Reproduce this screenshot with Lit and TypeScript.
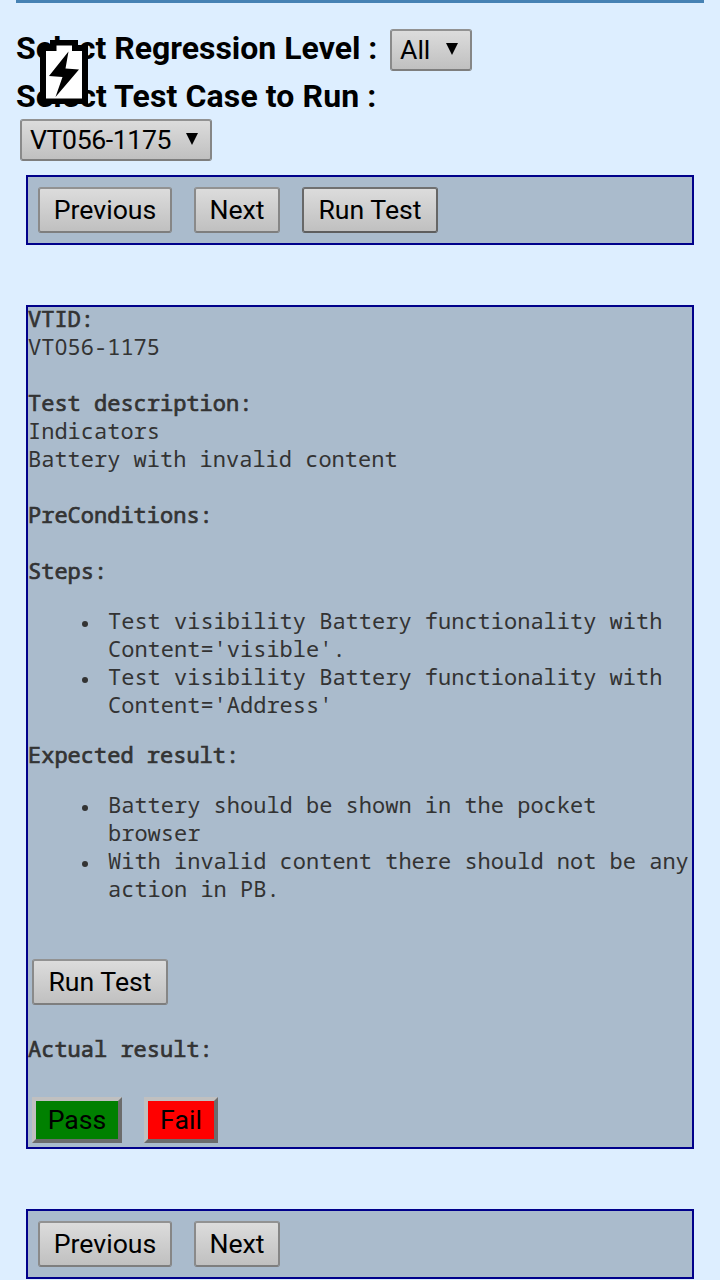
import { LitElement, html, css, nothing } from "lit";
import { customElement } from "lit/decorators.js";

@customElement("app-root")
export class AppRoot extends LitElement {
  static styles = css`
    :host { display: block; position: relative; box-sizing: border-box; height: 1280px; overflow: hidden; background: #def; padding: 0 16px; font-family: Roboto, sans-serif; color: #000; }
    * { box-sizing: border-box; }
    .rule { height: 3px; background: #4682b4; }
    .heading { display: flex; align-items: center; height: 44px; font-size: 32px; font-weight: 700; line-height: 38px; white-space: pre; }
    .first { margin-top: 25px; }
    .label { display: block; width: 374px; }
    .first .label { padding-bottom: 4px; }
    .second { height: 46px; margin-top: 1px; letter-spacing: 0.11px; }
    .select, .btn { display: flex; align-items: center; border: 2px solid; border-color: #929292 #868686 #7e7e7e #8a8a8a; border-radius: 3px; background: linear-gradient(#dcdcdc, #c0c0c0); color: #000; font: 400 26.67px/30px Roboto, sans-serif; white-space: nowrap; padding: 0 14px; margin: 0; }
    .select { height: 42px; padding: 0 12px 0 8px; justify-content: space-between; }
    .all { width: 82px; }
    .test { width: 192px; margin-left: 4px; letter-spacing: -0.4px; }
    .arrow { width: 12px; height: 12px; margin-bottom: 2px; }
    .bar { display: flex; gap: 22px; height: 70px; margin: 14px 10px 0; padding: 10px; border: 2px solid #00008b; background: #abc; }
    .bottom { margin-top: 60px; }
    .btn { height: 46px; justify-content: center; padding: 0; }
    .prev { width: 134px; } .next { width: 86px; } .run { width: 136px; }
    .focus { border-color: #707070 #666 #5e5e5e #686868; }
    .panel { height: 844px; margin: 60px 10px 0; border: 2px solid #00008b; background: #abc; color: #333; font: 22px/28px "Noto Sans Mono", "DejaVu Sans Mono", monospace; white-space: nowrap; }
    .line { height: 28px; margin-top: -2px; margin-bottom: 2px; }
    .panel > .line:first-child { margin-top: -3px; }
    .strong { -webkit-text-stroke: 0.7px #333; }
    .zero { display: inline-block; width: 13.2px; text-align: center; line-height: 20px; font-family: "Noto Sans", sans-serif; }
    .list { list-style: none; margin: 22px 0 24px; padding: 0 0 0 80px; }
    .list li { display: block; position: relative; white-space: pre-line; }
    .list li::before { content: ""; position: absolute; left: -26px; top: 15px; width: 6px; height: 6px; border-radius: 50%; background: #333; }
    .panel .btn { margin-left: 4px; }
    .gap { height: 33px; }
    .actual { margin-top: 31px; }
    .verdicts { display: flex; gap: 22px; margin: 35px 0 0 4px; }
    .panel .verdict { margin: 0; height: 46px; border: 4px solid; border-color: #c0c0c0 #6c6c6c #6c6c6c #c0c0c0; border-radius: 0; }
    .pass { width: 90px; background: #008000; }
    .fail { width: 74px; background: #f00; }
    .battery { position: absolute; left: 40px; top: 40px; width: 48px; height: 64px; }
  `;

  private arrow() {
    return html`<svg class="arrow" viewBox="0 0 12 12"><path d="M0 0H12L6 12Z" /></svg>`;
  }

  private line(text: unknown, strong = false) {
    return html`<div class="line ${strong ? "strong" : ""}">${text}</div>`;
  }

  private nav(cls: string, run: boolean) {
    return html`<div class="bar ${cls}">
      <button class="btn prev">Previous</button>
      <button class="btn next">Next</button>
      ${run ? html`<button class="btn run focus">Run Test</button>` : nothing}
    </div>`;
  }

  render() {
    return html`
      <div class="rule"></div>
      <div class="heading first"><span class="label">Select Regression Level :</span><div class="select all"><span>All</span>${this.arrow()}</div></div>
      <div class="heading second"><span class="label">Select Test Case to Run :</span></div>
      <div class="select test"><span>VT056-1175</span>${this.arrow()}</div>
      ${this.nav("", true)}
      <div class="panel">
        ${this.line("VTID:", true)}${this.line(html`VT<span class="zero">0</span>56-1175`)}${this.line("")}
        ${this.line("Test description:", true)}${this.line("Indicators")}${this.line("Battery with invalid content")}${this.line("")}
        ${this.line("PreConditions:", true)}${this.line("")}
        ${this.line("Steps:", true)}
        <ul class="list"><li>${"Test visibility Battery functionality with\nContent='visible'."}</li><li>${"Test visibility Battery functionality with\nContent='Address'"}</li></ul>
        ${this.line("Expected result:", true)}
        <ul class="list"><li>${"Battery should be shown in the pocket\nbrowser"}</li><li>${"With invalid content there should not be any\naction in PB."}</li></ul>
        <div class="gap"></div>
        <button class="btn run">Run Test</button>
        <div class="actual">${this.line("Actual result:", true)}</div>
        <div class="verdicts"><button class="btn verdict pass">Pass</button><button class="btn verdict fail">Fail</button></div>
      </div>
      ${this.nav("bottom", false)}
      <svg class="battery" viewBox="0 0 48 64"><path d="M0 5H10V0H38V5H48V64H0Z"/><path fill="#fff" d="M6 11H16.5V5.5H32V11H42V58.5H6Z"/><path d="M28.5 11.5L9 36L22.5 37L15.5 57L39 29.5L25.5 28.5Z"/></svg>
    `;
  }
}
